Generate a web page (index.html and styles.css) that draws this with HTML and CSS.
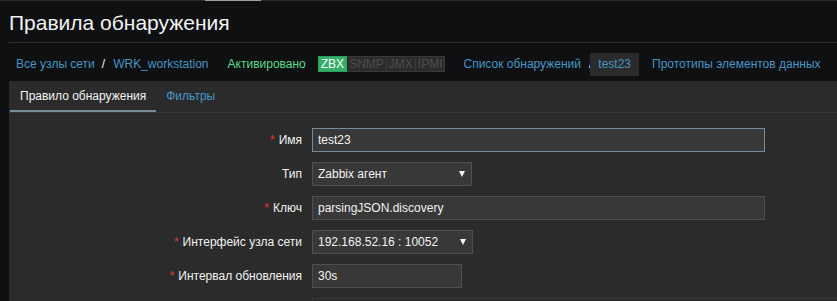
FILE: index.html
```html
<!DOCTYPE html>
<html lang="ru">
<head>
	<meta charset="UTF-8">
	<title>Правила обнаружения</title>
	<link rel="stylesheet" href="styles.css">
</head>
<body>
	<div class="topbar"><span class="thumb"></span></div>
	<header class="page-title">
		<h1>Правила обнаружения</h1>
	</header>
	<main class="wrapper">
		<nav class="crumbs">
			<a href="#">Все узлы сети</a>
			<span class="sep">/</span>
			<a href="#">WRK_workstation</a>
			<span class="status">Активировано</span>
			<span class="avail">
				<span class="on">ZBX</span><span>SNMP</span><span>JMX</span><span>IPMI</span>
			</span>
			<a href="#" class="gap">Список обнаружений</a>
			<span class="sep last">/</span>
			<span class="current">test23</span>
			<a href="#" class="gap">Прототипы элементов данных</a>
			<a href="#" class="gap">Прототипы</a>
		</nav>
		<section class="panel">
			<ul class="tabs">
				<li class="active">Правило обнаружения</li>
				<li><a href="#">Фильтры</a></li>
			</ul>
			<form class="form">
				<label class="req">Имя</label>
				<div class="field"><input type="text" class="wide focus" value="test23"></div>

				<label>Тип</label>
				<div class="field"><div class="select w160">Zabbix агент<i class="arrow"></i></div></div>

				<label class="req">Ключ</label>
				<div class="field"><input type="text" class="wide" value="parsingJSON.discovery"></div>

				<label class="req">Интерфейс узла сети</label>
				<div class="field"><div class="select w161">192.168.52.16 : 10052<i class="arrow"></i></div></div>

				<label class="req">Интервал обновления</label>
				<div class="field"><input type="text" class="short" value="30s"></div>

				<label></label>
				<div class="field"><div class="table-box"></div></div>
			</form>
		</section>
	</main>
</body>
</html>
```

FILE: styles.css
```css
/* base */
html, body {
	margin: 0;
	padding: 0;
	background-color: #0e1012;
	color: #f2f2f2;
	font: 12px "Liberation Sans", Arial, sans-serif;
	overflow: hidden;
}
a {
	color: #4796c4;
	text-decoration: none;
}
/* top strip */
.topbar {
	height: 1px;
	background-color: #2b2b2b;
	display: flex;
}
.topbar .thumb {
	margin-left: 205px;
	width: 56px;
	background-color: #a0a0a0;
}
/* title */
.page-title {
	margin-left: 9px;
	height: 41px;
	border-bottom: 1px solid #2f2f2f;
}
.page-title h1 {
	margin: 0;
	padding-top: 9px;
	font-weight: normal;
	font-size: 21px;
	line-height: 26px;
	color: #f2f2f2;
}
/* breadcrumbs */
.wrapper {
	margin-left: 9px;
}
.crumbs {
	display: flex;
	align-items: center;
	height: 38px;
	padding: 4px 0 0 7px;
	box-sizing: border-box;
	white-space: nowrap;
}
.crumbs .sep {
	margin: 0 8px 0 7px;
	color: #f2f2f2;
}
.crumbs .sep.last {
	margin: 0 0 0 8px;
}
.crumbs .status {
	margin-left: 19px;
	color: #59db8f;
}
.crumbs .gap {
	margin-left: 18px;
}
.crumbs .current + .gap {
	margin-left: 13px;
}
.avail {
	display: flex;
	margin-left: 12px;
	height: 16px;
	line-height: 14px;
}
.avail span {
	padding: 0 2px;
	border: 1px solid #383838;
	border-left: none;
	color: #4f4f4f;
	background-color: #2b2b2b;
}
.avail span.on {
	border: 1px solid #2f9f5e;
	background-color: #34af67;
	color: #fff;
}
.crumbs .current {
	padding: 0 8px;
	line-height: 23px;
	margin-left: -2px;
	background-color: #2b2b2b;
	color: #4796c4;
}
/* panel */
.panel {
	background-color: #2b2b2b;
	min-height: 220px;
}
.tabs {
	list-style: none;
	margin: 0;
	padding: 0 0 0 1px;
	display: flex;
	height: 31px;
	border-bottom: 1px solid #383838;
}
.tabs li {
	padding: 1px 10px 0;
	line-height: 28px;
	border-bottom: 2px solid transparent;
}
.tabs li.active {
	border-bottom-color: #768d99;
	color: #f2f2f2;
}
/* form */
.form {
	display: grid;
	grid-template-columns: 293px 1fr;
	column-gap: 10px;
	row-gap: 10px;
	padding-top: 15px;
}
.form label {
	text-align: right;
	line-height: 24px;
}
.form label.req::before {
	content: "*";
	color: #e33734;
	margin-right: 4px;
}
.field {
	display: flex;
	height: 24px;
}
.field input,
.field .select {
	box-sizing: border-box;
	height: 24px;
	margin: 0;
	padding: 0 5px;
	border: 1px solid #4f4f4f;
	background-color: #383838;
	color: #f2f2f2;
	font: 12px "Liberation Sans", Arial, sans-serif;
	outline: none;
}
.field input.wide {
	width: 453px;
}
.field input.short {
	width: 150px;
}
.field input.focus {
	border-color: #768d99;
}
.field .select {
	display: flex;
	align-items: center;
	justify-content: space-between;
	line-height: 22px;
}
.select.w160 {
	width: 160px;
}
.select.w161 {
	width: 161px;
}
.select .arrow {
	width: 0;
	height: 0;
	margin-right: 1px;
	border-left: 3px solid transparent;
	border-right: 3px solid transparent;
	border-top: 6px solid #f2f2f2;
}
.table-box {
	box-sizing: border-box;
	width: 600px;
	height: 24px;
	border-top: 1px solid #383838;
	border-left: 1px solid #383838;
}
```
